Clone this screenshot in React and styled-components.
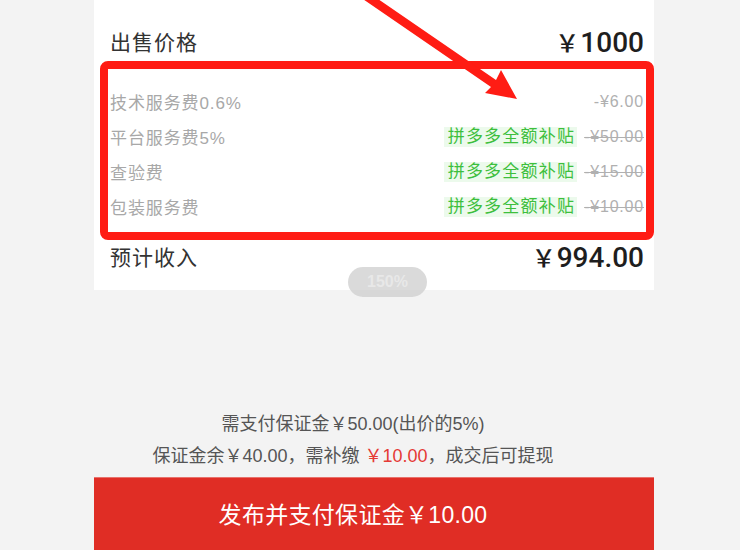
import React from 'react'
import styled, { createGlobalStyle } from 'styled-components'

const GlobalStyle = createGlobalStyle`
  body {
    margin: 0;
    background: #f3f3f3;
    font-family: "Liberation Sans", "Noto Sans CJK SC", sans-serif;
  }
`

const Page = styled.div`
  position: relative;
  width: 740px;
  height: 550px;
  overflow: hidden;
`

const Screen = styled.div`
  position: relative;
  width: 560px;
  margin-left: 94px;
  height: 550px;
  display: flex;
  flex-direction: column;
  background: #f3f3f3;
`

const TopCard = styled.section`
  background: #fff;
  padding: 16px 10px 9px 16px;
  display: flex;
  flex-direction: column;
`

const PriceRow = styled.div`
  height: 50px;
  display: flex;
  align-items: center;
  justify-content: space-between;
`

const PriceLabel = styled.span`
  font-size: 21px;
  letter-spacing: 1px;
  color: #333;
`

const BigAmount = styled.span`
  font-size: 28px;
  font-weight: 500;
  color: #1e1e1e;
  font-family: Roboto, "Noto Sans CJK SC", sans-serif;

  i {
    font-style: normal;
    font-family: "Noto Sans CJK SC", sans-serif;
    font-size: 24px;
    font-weight: 500;
    margin-right: 1px;
  }
`

const FeeList = styled.div`
  padding: 18px 0 7px;
  display: flex;
  flex-direction: column;
`

const FeeRow = styled.div`
  height: 35px;
  display: flex;
  align-items: center;
  justify-content: space-between;
`

const FeeLabel = styled.span`
  font-size: 17px;
  letter-spacing: 0.9px;
  color: #a8a8a8;
`

const FeeRight = styled.div`
  display: flex;
  align-items: center;
  gap: 7px;
`

const SubsidyTag = styled.span`
  background: #ecfaec;
  color: #3dbf3d;
  font-size: 17px;
  letter-spacing: 1.2px;
  line-height: 20px;
  padding: 0 2px 0 4px;
`

const FeeAmount = styled.span`
  font-size: 16px;
  letter-spacing: 0.8px;
  color: #b0b0b0;
  text-decoration: ${p => (p.$waived ? 'line-through' : 'none')};
`

const DepositArea = styled.section`
  flex: 1;
  display: flex;
  flex-direction: column;
  justify-content: flex-end;
  align-items: center;
  padding: 0 42px 5px 0;
`

const DepositLine = styled.p`
  margin: 0;
  line-height: 32px;
  font-size: 18px;
  color: #555;
`

const Red = styled.span`
  color: #e53935;
`

const SubmitButton = styled.button`
  height: 73px;
  border: none;
  border-top: 1px solid #e8716b;
  background: #e02d25;
  color: #fff;
  font-family: inherit;
  font-size: 23px;
  letter-spacing: 0.3px;
  padding: 0 42px 2px 0;
  cursor: pointer;
`

const AnnotationBox = styled.div`
  position: absolute;
  left: 6px;
  top: 61px;
  width: 554px;
  height: 179px;
  box-sizing: border-box;
  border: 8px solid #ff1c14;
  border-radius: 8px;
  pointer-events: none;
`

const ZoomPill = styled.div`
  position: absolute;
  left: 254px;
  top: 267px;
  width: 79px;
  height: 30px;
  border-radius: 15px;
  background: rgba(205, 205, 205, 0.75);
  color: #e8e8e8;
  font-size: 16px;
  font-weight: 700;
  display: flex;
  align-items: center;
  justify-content: center;
`

const ArrowLayer = styled.svg`
  position: absolute;
  left: 0;
  top: 0;
  pointer-events: none;
`

const fees = [
  { label: '技术服务费0.6%', amount: '-¥6.00', waived: false },
  { label: '平台服务费5%', amount: '-¥50.00', waived: true },
  { label: '查验费', amount: '-¥15.00', waived: true },
  { label: '包装服务费', amount: '-¥10.00', waived: true },
]

const App = () => {
  return (
    <Page>
      <GlobalStyle />
      <Screen>
        <TopCard>
          <PriceRow>
            <PriceLabel>出售价格</PriceLabel>
            <BigAmount><i>￥</i>1000</BigAmount>
          </PriceRow>
          <FeeList>
            {fees.map(f => (
              <FeeRow key={f.label}>
                <FeeLabel>{f.label}</FeeLabel>
                <FeeRight>
                  {f.waived && <SubsidyTag>拼多多全额补贴</SubsidyTag>}
                  <FeeAmount $waived={f.waived}>{f.amount}</FeeAmount>
                </FeeRight>
              </FeeRow>
            ))}
          </FeeList>
          <PriceRow>
            <PriceLabel>预计收入</PriceLabel>
            <BigAmount><i>￥</i>994.00</BigAmount>
          </PriceRow>
        </TopCard>
        <DepositArea>
          <DepositLine>需支付保证金￥50.00(出价的5%)</DepositLine>
          <DepositLine>
            保证金余￥40.00，需补缴 <Red>￥10.00</Red>，成交后可提现
          </DepositLine>
        </DepositArea>
        <SubmitButton>发布并支付保证金￥10.00</SubmitButton>
        <AnnotationBox />
        <ZoomPill>150%</ZoomPill>
      </Screen>
      <ArrowLayer width="740" height="550" viewBox="0 0 740 550">
        <polygon
          fill="#ff1c14"
          points="362,-12 357,-5 491,87 485,93 517,99 501,70 496,80"
        />
      </ArrowLayer>
    </Page>
  )
}

export default App
